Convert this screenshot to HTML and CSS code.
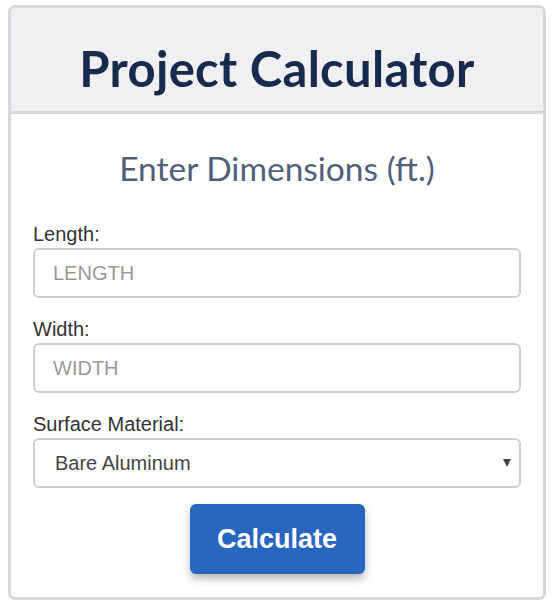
FILE: index.html
```html
<!DOCTYPE html>
<html>
<head>
<meta charset="utf-8">
<link rel="stylesheet" href="styles.css">
</head>
<body>
<div class="card">
  <div class="card-header">
    <h1 class="title">Project Calculator</h1>
  </div>
  <form class="card-body">
    <h2 class="subtitle">Enter Dimensions (ft.)</h2>
    <div class="group">
      <label class="label" for="length">Length:</label>
      <input class="field" id="length" type="text" placeholder="LENGTH">
    </div>
    <div class="group">
      <label class="label" for="width">Width:</label>
      <input class="field" id="width" type="text" placeholder="WIDTH">
    </div>
    <div class="group last">
      <label class="label" for="material">Surface Material:</label>
      <div class="select-wrap">
        <select class="field select" id="material">
          <option>Bare Aluminum</option>
        </select>
      </div>
    </div>
    <div class="actions">
      <button type="button" class="btn">Calculate</button>
    </div>
  </form>
</div>
</body>
</html>
```
FILE: styles.css
```css
* { box-sizing: border-box; }
html, body { margin: 0; padding: 0; background: #ffffff; }
body { font-family: "Liberation Sans", Arial, sans-serif; }

.card {
  width: 538px;
  height: 595px;
  margin: 5px 0 0 8px;
  border: 3px solid #d8d8dc;
  border-radius: 7px;
  display: flex;
  flex-direction: column;
  overflow: hidden;
}

.card-header {
  height: 106px;
  background: #f0f0f3;
  border-bottom: 3px solid #d8d8dc;
  display: flex;
  align-items: flex-start;
  justify-content: center;
}

.title {
  margin: 34px 0 0;
  font-family: "Lato", "Open Sans", sans-serif;
  font-weight: 700;
  font-size: 49px;
  line-height: 52px;
  color: #172b4d;
  letter-spacing: 0.3px;
}

.card-body {
  flex: 1;
  padding: 0 22px;
  display: flex;
  flex-direction: column;
}

.subtitle {
  margin: 34px 0 0;
  text-align: center;
  font-family: "Lato", "Open Sans", sans-serif;
  font-weight: 400;
  font-size: 33.5px;
  line-height: 40px;
  color: #505f79;
  height: 75px;
}

.group { display: flex; flex-direction: column; margin-bottom: 20px; }
.group.last { margin-bottom: 16px; }

.label {
  font-size: 20px;
  line-height: 23px;
  color: #333333;
  margin-bottom: 2px;
}

.field {
  width: 100%;
  height: 50px;
  border: 2px solid #cfcfd2;
  border-radius: 6px;
  padding: 0 18px;
  font-family: "Liberation Sans", Arial, sans-serif;
  font-size: 20px;
  color: #444444;
  background: #ffffff;
  outline: none;
}
.field::placeholder { color: #999999; }

.select-wrap { position: relative; }
.select {
  appearance: none;
  -webkit-appearance: none;
  padding: 0 40px 0 20px;
}
.select-wrap::after {
  content: "";
  position: absolute;
  right: 10px;
  top: 21px;
  border-left: 4.5px solid transparent;
  border-right: 4.5px solid transparent;
  border-top: 8px solid #444444;
}

.actions { display: flex; justify-content: center; }

.btn {
  width: 175px;
  height: 70px;
  border: none;
  border-radius: 6px;
  background: #2866c0;
  color: #ffffff;
  font-family: "Liberation Sans", Arial, sans-serif;
  font-weight: 700;
  font-size: 27px;
  box-shadow: 0 5px 8px rgba(0, 0, 0, 0.28);
  cursor: pointer;
}
```
